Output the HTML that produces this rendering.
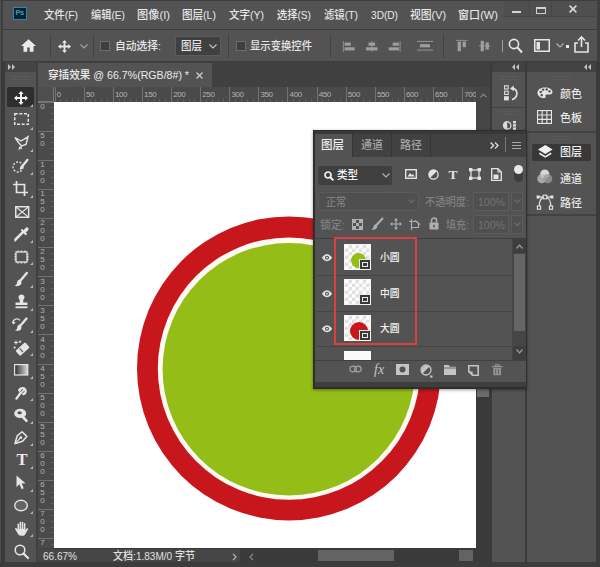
<!DOCTYPE html><html lang="zh-CN"><head><meta charset="utf-8"><title>穿插效果</title><style>
*{margin:0;padding:0;box-sizing:border-box}
html,body{width:600px;height:567px;overflow:hidden;background:#535353}
body{position:relative;font-family:"Liberation Sans","Noto Sans CJK SC",sans-serif;font-size:12px;color:#e6e6e6;line-height:1;font-weight:500}
.a{position:absolute}
.t{position:absolute;white-space:nowrap;line-height:14px;height:14px}
svg{position:absolute;overflow:visible}
</style></head><body>
<div class="a" style="left:0px;top:0px;width:600px;height:30px;background:#535353;"></div>
<div class="a" style="left:0px;top:28.5px;width:600px;height:1.5px;background:#3c3c3c;"></div>
<div class="a" style="left:12.5px;top:7px;width:14px;height:12.5px;background:#0a2131;border:1.5px solid #2f86ad;color:#3d9bc4;font-size:7.5px;font-weight:bold;line-height:9.5px;text-align:center;letter-spacing:-0.5px">Ps</div>
<div class="t" style="transform:scaleX(0.943);transform-origin:0 0;left:44px;top:8px;font-size:11px;color:#e8e8e8;">文件(F)</div>
<div class="t" style="transform:scaleX(0.927);transform-origin:0 0;left:91px;top:8px;font-size:11px;color:#e8e8e8;">编辑(E)</div>
<div class="t" style="transform:scaleX(1.019);transform-origin:0 0;left:137px;top:8px;font-size:11px;color:#e8e8e8;">图像(I)</div>
<div class="t" style="transform:scaleX(0.959);transform-origin:0 0;left:182px;top:8px;font-size:11px;color:#e8e8e8;">图层(L)</div>
<div class="t" style="transform:scaleX(0.954);transform-origin:0 0;left:229px;top:8px;font-size:11px;color:#e8e8e8;">文字(Y)</div>
<div class="t" style="transform:scaleX(0.927);transform-origin:0 0;left:277px;top:8px;font-size:11px;color:#e8e8e8;">选择(S)</div>
<div class="t" style="transform:scaleX(0.943);transform-origin:0 0;left:324px;top:8px;font-size:11px;color:#e8e8e8;">滤镜(T)</div>
<div class="t" style="transform:scaleX(0.920);transform-origin:0 0;left:371px;top:8px;font-size:11px;color:#e8e8e8;">3D(D)</div>
<div class="t" style="transform:scaleX(0.982);transform-origin:0 0;left:410px;top:8px;font-size:11px;color:#e8e8e8;">视图(V)</div>
<div class="t" style="transform:scaleX(1.007);transform-origin:0 0;left:458px;top:8px;font-size:11px;color:#e8e8e8;">窗口(W)</div>
<div class="a" style="left:504px;top:1px;width:91.5px;height:15px;background:#4f4f4f;"></div>
<div class="a" style="left:504px;top:16px;width:91.5px;height:1px;background:#474747;"></div>
<div class="a" style="left:528.5px;top:1px;width:1px;height:15px;background:#464646;"></div>
<div class="a" style="left:551px;top:1px;width:1px;height:15px;background:#464646;"></div>
<div class="a" style="left:512px;top:11px;width:9px;height:2px;background:#d4d4d4;"></div>
<div class="a" style="left:536px;top:6.5px;width:9.5px;height:7px;border:1.4px solid #d0d0d0;border-top-width:2px"></div>
<svg style="left:569px;top:5px" width="8" height="8"><path d="M0.6 0.6L7.4 7.4M7.4 0.6L0.6 7.4" stroke="#d4d4d4" stroke-width="1.7"/></svg>
<div class="a" style="left:0px;top:30px;width:600px;height:32px;background:#535353;"></div>
<div class="a" style="left:0px;top:61px;width:600px;height:1px;background:#3c3c3c;"></div>
<svg style="left:20.5px;top:39px" width="15" height="13" viewBox="0 0 18 15"><path d="M9 0L0 8H3V15H7.5V10H10.5V15H15V8H18Z" fill="#ececec"/></svg>
<div class="a" style="left:50px;top:34px;width:1px;height:24px;background:#424242;"></div>
<svg style="left:57.5px;top:39.5px" width="13" height="13" viewBox="0 0 16 16"><path d="M8 0L5 3.4H6.9V6.9H3.4V5L0 8L3.4 11V9.1H6.9V12.6H5L8 16L11 12.6H9.1V9.1H12.6V11L16 8L12.6 5V6.9H9.1V3.4H11Z" fill="#e6e6e6"/></svg>
<svg style="left:79.5px;top:43.5px" width="8" height="5"><path d="M0.5 0.5L4 4L7.5 0.5" stroke="#a4a4a4" stroke-width="1.2" fill="none"/></svg>
<div class="a" style="left:93px;top:34px;width:1px;height:24px;background:#424242;"></div>
<div class="a" style="left:100px;top:41px;width:10px;height:10px;border:1px solid #6c6c6c;background:#3e3e3e"></div>
<div class="t" style="transform:scaleX(0.977);transform-origin:0 0;left:115px;top:39px;font-size:11px;color:#e6e6e6;">自动选择:</div>
<div class="a" style="left:175px;top:36px;width:46px;height:20px;border:1px solid #5c5c5c;background:#404040;border-radius:2px"></div>
<div class="t" style="transform:scaleX(0.955);transform-origin:0 0;left:181px;top:39px;font-size:11px;color:#e6e6e6;">图层</div>
<svg style="left:209px;top:44px" width="8" height="5"><path d="M0.5 0.5L4 4L7.5 0.5" stroke="#c0c0c0" stroke-width="1.2" fill="none"/></svg>
<div class="a" style="left:228px;top:34px;width:1px;height:24px;background:#424242;"></div>
<div class="a" style="left:236px;top:41px;width:10px;height:10px;border:1px solid #6c6c6c;background:#3e3e3e"></div>
<div class="t" style="transform:scaleX(0.939);transform-origin:0 0;left:250px;top:39px;font-size:11px;color:#e6e6e6;">显示变换控件</div>
<div class="a" style="left:330px;top:34px;width:1px;height:24px;background:#424242;"></div>
<svg style="left:342.5px;top:40.5px" width="12.5" height="11" viewBox="0 0 16 14" preserveAspectRatio="none"><path d="M0.5 0V14" stroke="#9e9e9e"/><rect x="2" y="2" width="8" height="4" fill="#9e9e9e"/><rect x="2" y="8" width="13" height="4" fill="#9e9e9e"/></svg>
<svg style="left:365.8px;top:40.5px" width="11.6" height="11" viewBox="0 0 14 14" preserveAspectRatio="none"><path d="M7 0V14" stroke="#9e9e9e"/><rect x="3" y="2" width="8" height="4" fill="#9e9e9e"/><rect x="0" y="8" width="14" height="4" fill="#9e9e9e"/></svg>
<svg style="left:387.5px;top:40.5px" width="12.5" height="11" viewBox="0 0 16 14" preserveAspectRatio="none"><path d="M15.5 0V14" stroke="#9e9e9e"/><rect x="6" y="2" width="8" height="4" fill="#9e9e9e"/><rect x="1" y="8" width="13" height="4" fill="#9e9e9e"/></svg>
<svg style="left:416.5px;top:41px" width="16" height="9.5" viewBox="0 0 16 12" preserveAspectRatio="none"><path d="M0 0.5H16M0 11.5H16" stroke="#9e9e9e"/><rect x="3" y="4" width="10" height="4" fill="#9e9e9e"/></svg>
<div class="a" style="left:443px;top:34px;width:1px;height:24px;background:#424242;"></div>
<svg style="left:456px;top:40px" width="11.5" height="12" viewBox="0 0 14 15" preserveAspectRatio="none"><path d="M0 0.5H14" stroke="#9e9e9e"/><rect x="2" y="2" width="4" height="12" fill="#9e9e9e"/><rect x="8" y="2" width="4" height="7" fill="#9e9e9e"/></svg>
<svg style="left:478.5px;top:40px" width="11.5" height="12" viewBox="0 0 14 15" preserveAspectRatio="none"><path d="M0 7.5H14" stroke="#9e9e9e"/><rect x="2" y="1" width="4" height="13" fill="#9e9e9e"/><rect x="8" y="3" width="4" height="9" fill="#9e9e9e"/></svg>
<div class="a" style="left:501.5px;top:40px;width:1px;height:12px;background:#9e9e9e;"></div>
<svg style="left:508px;top:38px" width="15" height="16"><circle cx="6" cy="6" r="4.6" stroke="#e6e6e6" stroke-width="1.6" fill="none"/><path d="M9.5 9.5L14 14.5" stroke="#e6e6e6" stroke-width="2"/></svg>
<svg style="left:534px;top:39px" width="16" height="13"><rect x="0.75" y="0.75" width="14.5" height="11.5" stroke="#e6e6e6" stroke-width="1.5" fill="none"/><rect x="2.5" y="3" width="3.5" height="7.5" fill="#e6e6e6"/></svg>
<svg style="left:556px;top:43px" width="8" height="5"><path d="M0.5 0.5L4 4L7.5 0.5" stroke="#b0b0b0" stroke-width="1.2" fill="none"/></svg>
<div class="a" style="left:566px;top:45px;width:3px;height:3px;background:#e6e6e6;"></div>
<svg style="left:574px;top:36px" width="15" height="17"><path d="M4 7H1V16H14V7H11" stroke="#e6e6e6" stroke-width="1.6" fill="none"/><path d="M7.5 11V2" stroke="#e6e6e6" stroke-width="1.6"/><path d="M4 4.5L7.5 1L11 4.5" stroke="#e6e6e6" stroke-width="1.6" fill="none"/></svg>
<div class="a" style="left:0px;top:62px;width:600px;height:505px;background:#3f3f3f;"></div>
<div class="a" style="left:0px;top:62px;width:4.5px;height:505px;background:#3a3a3a;"></div>
<div class="a" style="left:4.5px;top:62px;width:31.7px;height:500px;background:#535353;"></div>
<div class="a" style="left:4.5px;top:62px;width:31.7px;height:10px;background:#444444;"></div>
<svg style="left:8px;top:64px" width="8" height="6"><path d="M0 0L3 3L0 6ZM4 0L7 3L4 6Z" fill="#c4c4c4"/></svg>
<div class="a" style="left:12px;top:76px;width:18px;height:1px;background:#5a5a5a;"></div>
<div class="a" style="left:12px;top:79px;width:18px;height:1px;background:#5a5a5a;"></div>
<div class="a" style="left:7px;top:87.3px;width:27.3px;height:20px;background:#2e2e2e;border-radius:2px"></div>
<div class="a" style="left:37px;top:62px;width:453px;height:25px;background:#404040;"></div>
<div class="a" style="left:38px;top:63px;width:174px;height:24px;background:#535353;"></div>
<div class="t" style="transform:scaleX(0.964);transform-origin:0 0;left:48px;top:68px;font-size:11px;color:#ececec;">穿插效果 @ 66.7%(RGB/8#) *</div>
<svg style="left:196px;top:72px" width="7" height="7"><path d="M0.5 0.5L6.5 6.5M6.5 0.5L0.5 6.5" stroke="#c8c8c8" stroke-width="1.4"/></svg>
<div class="a" style="left:38px;top:87px;width:452px;height:15px;background:#4a4a4a;"></div>
<div class="a" style="left:38px;top:87px;width:16px;height:461px;background:#4a4a4a;"></div>
<div class="a" style="left:38px;top:87px;width:16px;height:15px;background:#4e4e4e;"></div>
<div class="a" style="left:53px;top:87px;width:1px;height:15px;background:#777;"></div>
<div class="a" style="left:38px;top:101px;width:16px;height:1px;background:#777;"></div>
<div class="a" style="left:54.6px;top:87px;width:1px;height:15px;background:#727272"></div><div class="t" style="left:56.8px;top:88.8px;font-size:8px;letter-spacing:-0.4px;line-height:11px;height:11px;color:#b4b4b4">0</div><div class="a" style="left:60.4px;top:99px;width:1px;height:3px;background:#606060"></div><div class="a" style="left:66.2px;top:99px;width:1px;height:3px;background:#606060"></div><div class="a" style="left:72.1px;top:99px;width:1px;height:3px;background:#606060"></div><div class="a" style="left:77.9px;top:99px;width:1px;height:3px;background:#606060"></div><div class="a" style="left:83.7px;top:87px;width:1px;height:15px;background:#727272"></div><div class="t" style="left:85.9px;top:88.8px;font-size:8px;letter-spacing:-0.4px;line-height:11px;height:11px;color:#b4b4b4">50</div><div class="a" style="left:89.5px;top:99px;width:1px;height:3px;background:#606060"></div><div class="a" style="left:95.3px;top:99px;width:1px;height:3px;background:#606060"></div><div class="a" style="left:101.2px;top:99px;width:1px;height:3px;background:#606060"></div><div class="a" style="left:107.0px;top:99px;width:1px;height:3px;background:#606060"></div><div class="a" style="left:112.8px;top:87px;width:1px;height:15px;background:#727272"></div><div class="t" style="left:115.0px;top:88.8px;font-size:8px;letter-spacing:-0.4px;line-height:11px;height:11px;color:#b4b4b4">100</div><div class="a" style="left:118.6px;top:99px;width:1px;height:3px;background:#606060"></div><div class="a" style="left:124.4px;top:99px;width:1px;height:3px;background:#606060"></div><div class="a" style="left:130.3px;top:99px;width:1px;height:3px;background:#606060"></div><div class="a" style="left:136.1px;top:99px;width:1px;height:3px;background:#606060"></div><div class="a" style="left:141.9px;top:87px;width:1px;height:15px;background:#727272"></div><div class="t" style="left:144.1px;top:88.8px;font-size:8px;letter-spacing:-0.4px;line-height:11px;height:11px;color:#b4b4b4">150</div><div class="a" style="left:147.7px;top:99px;width:1px;height:3px;background:#606060"></div><div class="a" style="left:153.5px;top:99px;width:1px;height:3px;background:#606060"></div><div class="a" style="left:159.4px;top:99px;width:1px;height:3px;background:#606060"></div><div class="a" style="left:165.2px;top:99px;width:1px;height:3px;background:#606060"></div><div class="a" style="left:171.0px;top:87px;width:1px;height:15px;background:#727272"></div><div class="t" style="left:173.2px;top:88.8px;font-size:8px;letter-spacing:-0.4px;line-height:11px;height:11px;color:#b4b4b4">200</div><div class="a" style="left:176.8px;top:99px;width:1px;height:3px;background:#606060"></div><div class="a" style="left:182.6px;top:99px;width:1px;height:3px;background:#606060"></div><div class="a" style="left:188.5px;top:99px;width:1px;height:3px;background:#606060"></div><div class="a" style="left:194.3px;top:99px;width:1px;height:3px;background:#606060"></div><div class="a" style="left:200.1px;top:87px;width:1px;height:15px;background:#727272"></div><div class="t" style="left:202.3px;top:88.8px;font-size:8px;letter-spacing:-0.4px;line-height:11px;height:11px;color:#b4b4b4">250</div><div class="a" style="left:205.9px;top:99px;width:1px;height:3px;background:#606060"></div><div class="a" style="left:211.7px;top:99px;width:1px;height:3px;background:#606060"></div><div class="a" style="left:217.6px;top:99px;width:1px;height:3px;background:#606060"></div><div class="a" style="left:223.4px;top:99px;width:1px;height:3px;background:#606060"></div><div class="a" style="left:229.2px;top:87px;width:1px;height:15px;background:#727272"></div><div class="t" style="left:231.4px;top:88.8px;font-size:8px;letter-spacing:-0.4px;line-height:11px;height:11px;color:#b4b4b4">300</div><div class="a" style="left:235.0px;top:99px;width:1px;height:3px;background:#606060"></div><div class="a" style="left:240.8px;top:99px;width:1px;height:3px;background:#606060"></div><div class="a" style="left:246.7px;top:99px;width:1px;height:3px;background:#606060"></div><div class="a" style="left:252.5px;top:99px;width:1px;height:3px;background:#606060"></div><div class="a" style="left:258.3px;top:87px;width:1px;height:15px;background:#727272"></div><div class="t" style="left:260.5px;top:88.8px;font-size:8px;letter-spacing:-0.4px;line-height:11px;height:11px;color:#b4b4b4">350</div><div class="a" style="left:264.1px;top:99px;width:1px;height:3px;background:#606060"></div><div class="a" style="left:269.9px;top:99px;width:1px;height:3px;background:#606060"></div><div class="a" style="left:275.8px;top:99px;width:1px;height:3px;background:#606060"></div><div class="a" style="left:281.6px;top:99px;width:1px;height:3px;background:#606060"></div><div class="a" style="left:287.4px;top:87px;width:1px;height:15px;background:#727272"></div><div class="t" style="left:289.6px;top:88.8px;font-size:8px;letter-spacing:-0.4px;line-height:11px;height:11px;color:#b4b4b4">400</div><div class="a" style="left:293.2px;top:99px;width:1px;height:3px;background:#606060"></div><div class="a" style="left:299.0px;top:99px;width:1px;height:3px;background:#606060"></div><div class="a" style="left:304.9px;top:99px;width:1px;height:3px;background:#606060"></div><div class="a" style="left:310.7px;top:99px;width:1px;height:3px;background:#606060"></div><div class="a" style="left:316.5px;top:87px;width:1px;height:15px;background:#727272"></div><div class="t" style="left:318.7px;top:88.8px;font-size:8px;letter-spacing:-0.4px;line-height:11px;height:11px;color:#b4b4b4">450</div><div class="a" style="left:322.3px;top:99px;width:1px;height:3px;background:#606060"></div><div class="a" style="left:328.1px;top:99px;width:1px;height:3px;background:#606060"></div><div class="a" style="left:334.0px;top:99px;width:1px;height:3px;background:#606060"></div><div class="a" style="left:339.8px;top:99px;width:1px;height:3px;background:#606060"></div><div class="a" style="left:345.6px;top:87px;width:1px;height:15px;background:#727272"></div><div class="t" style="left:347.8px;top:88.8px;font-size:8px;letter-spacing:-0.4px;line-height:11px;height:11px;color:#b4b4b4">500</div><div class="a" style="left:351.4px;top:99px;width:1px;height:3px;background:#606060"></div><div class="a" style="left:357.2px;top:99px;width:1px;height:3px;background:#606060"></div><div class="a" style="left:363.1px;top:99px;width:1px;height:3px;background:#606060"></div><div class="a" style="left:368.9px;top:99px;width:1px;height:3px;background:#606060"></div><div class="a" style="left:374.7px;top:87px;width:1px;height:15px;background:#727272"></div><div class="t" style="left:376.9px;top:88.8px;font-size:8px;letter-spacing:-0.4px;line-height:11px;height:11px;color:#b4b4b4">550</div><div class="a" style="left:380.5px;top:99px;width:1px;height:3px;background:#606060"></div><div class="a" style="left:386.3px;top:99px;width:1px;height:3px;background:#606060"></div><div class="a" style="left:392.2px;top:99px;width:1px;height:3px;background:#606060"></div><div class="a" style="left:398.0px;top:99px;width:1px;height:3px;background:#606060"></div><div class="a" style="left:403.8px;top:87px;width:1px;height:15px;background:#727272"></div><div class="t" style="left:406.0px;top:88.8px;font-size:8px;letter-spacing:-0.4px;line-height:11px;height:11px;color:#b4b4b4">600</div><div class="a" style="left:409.6px;top:99px;width:1px;height:3px;background:#606060"></div><div class="a" style="left:415.4px;top:99px;width:1px;height:3px;background:#606060"></div><div class="a" style="left:421.3px;top:99px;width:1px;height:3px;background:#606060"></div><div class="a" style="left:427.1px;top:99px;width:1px;height:3px;background:#606060"></div><div class="a" style="left:432.9px;top:87px;width:1px;height:15px;background:#727272"></div><div class="t" style="left:435.1px;top:88.8px;font-size:8px;letter-spacing:-0.4px;line-height:11px;height:11px;color:#b4b4b4">650</div><div class="a" style="left:438.7px;top:99px;width:1px;height:3px;background:#606060"></div><div class="a" style="left:444.5px;top:99px;width:1px;height:3px;background:#606060"></div><div class="a" style="left:450.4px;top:99px;width:1px;height:3px;background:#606060"></div><div class="a" style="left:456.2px;top:99px;width:1px;height:3px;background:#606060"></div><div class="a" style="left:462.0px;top:87px;width:1px;height:15px;background:#727272"></div><div class="t" style="left:464.2px;top:88.8px;font-size:8px;letter-spacing:-0.4px;line-height:11px;height:11px;color:#b4b4b4">700</div><div class="a" style="left:467.8px;top:99px;width:1px;height:3px;background:#606060"></div><div class="a" style="left:473.6px;top:99px;width:1px;height:3px;background:#606060"></div><div class="a" style="left:38px;top:101.6px;width:16px;height:1px;background:#727272"></div><div class="a" style="left:38.5px;top:102.9px;font-size:8px;line-height:8px;color:#b4b4b4;width:8px;text-align:center;overflow:hidden;max-height:442px">0</div><div class="a" style="left:51px;top:107.4px;width:3px;height:1px;background:#606060"></div><div class="a" style="left:51px;top:113.2px;width:3px;height:1px;background:#606060"></div><div class="a" style="left:51px;top:119.1px;width:3px;height:1px;background:#606060"></div><div class="a" style="left:51px;top:124.9px;width:3px;height:1px;background:#606060"></div><div class="a" style="left:38px;top:130.7px;width:16px;height:1px;background:#727272"></div><div class="a" style="left:38.5px;top:132.0px;font-size:8px;line-height:8px;color:#b4b4b4;width:8px;text-align:center;overflow:hidden;max-height:413px">5<br>0</div><div class="a" style="left:51px;top:136.5px;width:3px;height:1px;background:#606060"></div><div class="a" style="left:51px;top:142.3px;width:3px;height:1px;background:#606060"></div><div class="a" style="left:51px;top:148.2px;width:3px;height:1px;background:#606060"></div><div class="a" style="left:51px;top:154.0px;width:3px;height:1px;background:#606060"></div><div class="a" style="left:38px;top:159.8px;width:16px;height:1px;background:#727272"></div><div class="a" style="left:38.5px;top:161.1px;font-size:8px;line-height:8px;color:#b4b4b4;width:8px;text-align:center;overflow:hidden;max-height:384px">1<br>0<br>0</div><div class="a" style="left:51px;top:165.6px;width:3px;height:1px;background:#606060"></div><div class="a" style="left:51px;top:171.4px;width:3px;height:1px;background:#606060"></div><div class="a" style="left:51px;top:177.3px;width:3px;height:1px;background:#606060"></div><div class="a" style="left:51px;top:183.1px;width:3px;height:1px;background:#606060"></div><div class="a" style="left:38px;top:188.9px;width:16px;height:1px;background:#727272"></div><div class="a" style="left:38.5px;top:190.2px;font-size:8px;line-height:8px;color:#b4b4b4;width:8px;text-align:center;overflow:hidden;max-height:355px">1<br>5<br>0</div><div class="a" style="left:51px;top:194.7px;width:3px;height:1px;background:#606060"></div><div class="a" style="left:51px;top:200.5px;width:3px;height:1px;background:#606060"></div><div class="a" style="left:51px;top:206.4px;width:3px;height:1px;background:#606060"></div><div class="a" style="left:51px;top:212.2px;width:3px;height:1px;background:#606060"></div><div class="a" style="left:38px;top:218.0px;width:16px;height:1px;background:#727272"></div><div class="a" style="left:38.5px;top:219.3px;font-size:8px;line-height:8px;color:#b4b4b4;width:8px;text-align:center;overflow:hidden;max-height:326px">2<br>0<br>0</div><div class="a" style="left:51px;top:223.8px;width:3px;height:1px;background:#606060"></div><div class="a" style="left:51px;top:229.6px;width:3px;height:1px;background:#606060"></div><div class="a" style="left:51px;top:235.5px;width:3px;height:1px;background:#606060"></div><div class="a" style="left:51px;top:241.3px;width:3px;height:1px;background:#606060"></div><div class="a" style="left:38px;top:247.1px;width:16px;height:1px;background:#727272"></div><div class="a" style="left:38.5px;top:248.4px;font-size:8px;line-height:8px;color:#b4b4b4;width:8px;text-align:center;overflow:hidden;max-height:297px">2<br>5<br>0</div><div class="a" style="left:51px;top:252.9px;width:3px;height:1px;background:#606060"></div><div class="a" style="left:51px;top:258.7px;width:3px;height:1px;background:#606060"></div><div class="a" style="left:51px;top:264.6px;width:3px;height:1px;background:#606060"></div><div class="a" style="left:51px;top:270.4px;width:3px;height:1px;background:#606060"></div><div class="a" style="left:38px;top:276.2px;width:16px;height:1px;background:#727272"></div><div class="a" style="left:38.5px;top:277.5px;font-size:8px;line-height:8px;color:#b4b4b4;width:8px;text-align:center;overflow:hidden;max-height:268px">3<br>0<br>0</div><div class="a" style="left:51px;top:282.0px;width:3px;height:1px;background:#606060"></div><div class="a" style="left:51px;top:287.8px;width:3px;height:1px;background:#606060"></div><div class="a" style="left:51px;top:293.7px;width:3px;height:1px;background:#606060"></div><div class="a" style="left:51px;top:299.5px;width:3px;height:1px;background:#606060"></div><div class="a" style="left:38px;top:305.3px;width:16px;height:1px;background:#727272"></div><div class="a" style="left:38.5px;top:306.6px;font-size:8px;line-height:8px;color:#b4b4b4;width:8px;text-align:center;overflow:hidden;max-height:239px">3<br>5<br>0</div><div class="a" style="left:51px;top:311.1px;width:3px;height:1px;background:#606060"></div><div class="a" style="left:51px;top:316.9px;width:3px;height:1px;background:#606060"></div><div class="a" style="left:51px;top:322.8px;width:3px;height:1px;background:#606060"></div><div class="a" style="left:51px;top:328.6px;width:3px;height:1px;background:#606060"></div><div class="a" style="left:38px;top:334.4px;width:16px;height:1px;background:#727272"></div><div class="a" style="left:38.5px;top:335.7px;font-size:8px;line-height:8px;color:#b4b4b4;width:8px;text-align:center;overflow:hidden;max-height:210px">4<br>0<br>0</div><div class="a" style="left:51px;top:340.2px;width:3px;height:1px;background:#606060"></div><div class="a" style="left:51px;top:346.0px;width:3px;height:1px;background:#606060"></div><div class="a" style="left:51px;top:351.9px;width:3px;height:1px;background:#606060"></div><div class="a" style="left:51px;top:357.7px;width:3px;height:1px;background:#606060"></div><div class="a" style="left:38px;top:363.5px;width:16px;height:1px;background:#727272"></div><div class="a" style="left:38.5px;top:364.8px;font-size:8px;line-height:8px;color:#b4b4b4;width:8px;text-align:center;overflow:hidden;max-height:180px">4<br>5<br>0</div><div class="a" style="left:51px;top:369.3px;width:3px;height:1px;background:#606060"></div><div class="a" style="left:51px;top:375.1px;width:3px;height:1px;background:#606060"></div><div class="a" style="left:51px;top:381.0px;width:3px;height:1px;background:#606060"></div><div class="a" style="left:51px;top:386.8px;width:3px;height:1px;background:#606060"></div><div class="a" style="left:38px;top:392.6px;width:16px;height:1px;background:#727272"></div><div class="a" style="left:38.5px;top:393.9px;font-size:8px;line-height:8px;color:#b4b4b4;width:8px;text-align:center;overflow:hidden;max-height:151px">5<br>0<br>0</div><div class="a" style="left:51px;top:398.4px;width:3px;height:1px;background:#606060"></div><div class="a" style="left:51px;top:404.2px;width:3px;height:1px;background:#606060"></div><div class="a" style="left:51px;top:410.1px;width:3px;height:1px;background:#606060"></div><div class="a" style="left:51px;top:415.9px;width:3px;height:1px;background:#606060"></div><div class="a" style="left:38px;top:421.7px;width:16px;height:1px;background:#727272"></div><div class="a" style="left:38.5px;top:423.0px;font-size:8px;line-height:8px;color:#b4b4b4;width:8px;text-align:center;overflow:hidden;max-height:122px">5<br>5<br>0</div><div class="a" style="left:51px;top:427.5px;width:3px;height:1px;background:#606060"></div><div class="a" style="left:51px;top:433.3px;width:3px;height:1px;background:#606060"></div><div class="a" style="left:51px;top:439.2px;width:3px;height:1px;background:#606060"></div><div class="a" style="left:51px;top:445.0px;width:3px;height:1px;background:#606060"></div><div class="a" style="left:38px;top:450.8px;width:16px;height:1px;background:#727272"></div><div class="a" style="left:38.5px;top:452.1px;font-size:8px;line-height:8px;color:#b4b4b4;width:8px;text-align:center;overflow:hidden;max-height:93px">6<br>0<br>0</div><div class="a" style="left:51px;top:456.6px;width:3px;height:1px;background:#606060"></div><div class="a" style="left:51px;top:462.4px;width:3px;height:1px;background:#606060"></div><div class="a" style="left:51px;top:468.3px;width:3px;height:1px;background:#606060"></div><div class="a" style="left:51px;top:474.1px;width:3px;height:1px;background:#606060"></div><div class="a" style="left:38px;top:479.9px;width:16px;height:1px;background:#727272"></div><div class="a" style="left:38.5px;top:481.2px;font-size:8px;line-height:8px;color:#b4b4b4;width:8px;text-align:center;overflow:hidden;max-height:64px">6<br>5<br>0</div><div class="a" style="left:51px;top:485.7px;width:3px;height:1px;background:#606060"></div><div class="a" style="left:51px;top:491.5px;width:3px;height:1px;background:#606060"></div><div class="a" style="left:51px;top:497.4px;width:3px;height:1px;background:#606060"></div><div class="a" style="left:51px;top:503.2px;width:3px;height:1px;background:#606060"></div><div class="a" style="left:38px;top:509.0px;width:16px;height:1px;background:#727272"></div><div class="a" style="left:38.5px;top:510.3px;font-size:8px;line-height:8px;color:#b4b4b4;width:8px;text-align:center;overflow:hidden;max-height:35px">7<br>0<br>0</div><div class="a" style="left:51px;top:514.8px;width:3px;height:1px;background:#606060"></div><div class="a" style="left:51px;top:520.6px;width:3px;height:1px;background:#606060"></div><div class="a" style="left:51px;top:526.5px;width:3px;height:1px;background:#606060"></div><div class="a" style="left:51px;top:532.3px;width:3px;height:1px;background:#606060"></div><div class="a" style="left:38px;top:538.1px;width:16px;height:1px;background:#727272"></div><div class="a" style="left:38.5px;top:539.4px;font-size:8px;line-height:8px;color:#b4b4b4;width:8px;text-align:center;overflow:hidden;max-height:6px">7<br>5<br>0</div><div class="a" style="left:51px;top:543.9px;width:3px;height:1px;background:#606060"></div>
<div class="a" style="left:54px;top:102px;width:422px;height:446px;background:#fff;overflow:hidden"><svg style="left:0;top:0" width="422" height="446"><circle cx="235" cy="266.4" r="152" fill="#c8161d"/><circle cx="235" cy="266.6" r="131.2" fill="#fdfbf2"/><circle cx="234.8" cy="267.2" r="126.2" fill="#95bd18"/></svg></div>
<div class="a" style="left:476px;top:87px;width:14px;height:475px;background:#3a3a3a;"></div>
<div class="a" style="left:476px;top:87px;width:14px;height:44px;background:#464646;"></div>
<svg style="left:480px;top:92.5px" width="7" height="5" viewBox="0 0 8 5"><path d="M0.5 4.5L4 1L7.5 4.5" stroke="#9a9a9a" stroke-width="1.2" fill="none"/></svg>
<div class="a" style="left:477px;top:389px;width:12px;height:8px;background:#6b6b6b;"></div>
<div class="a" style="left:54px;top:548px;width:436px;height:14px;background:#3a3a3a;"></div>
<div class="a" style="left:318px;top:550px;width:76px;height:11px;background:#636363;"></div>
<div class="a" style="left:459px;top:550px;width:14px;height:11px;background:#636363;"></div>
<div class="a" style="left:37px;top:548.5px;width:203px;height:14px;background:#464646;"></div>
<svg style="left:232px;top:552.5px" width="5" height="8"><path d="M1 0.8L4 4L1 7.2" stroke="#b8b8b8" stroke-width="1.2" fill="none"/></svg>
<svg style="left:248.5px;top:552.5px" width="5" height="8"><path d="M4 0.8L1 4L4 7.2" stroke="#8a8a8a" stroke-width="1.2" fill="none"/></svg>
<div class="t" style="transform:scaleX(0.911);transform-origin:0 0;left:42.5px;top:548.5px;font-size:11px;color:#e0e0e0;">66.67%</div>
<div class="t" style="transform:scaleX(0.913);transform-origin:0 0;left:113px;top:548.5px;font-size:11px;color:#e0e0e0;">文档:1.83M/0 字节</div>
<div class="a" style="left:490px;top:62px;width:110px;height:505px;background:#3a3a3a;"></div>
<div class="a" style="left:492px;top:62px;width:33px;height:500px;background:#535353;"></div>
<div class="a" style="left:492px;top:62px;width:33px;height:10px;background:#424242;"></div>
<svg style="left:512px;top:64px" width="8" height="6"><path d="M3 0L0 3L3 6ZM7 0L4 3L7 6Z" fill="#c4c4c4"/></svg>
<div class="a" style="left:500px;top:76px;width:18px;height:1px;background:#5a5a5a;"></div>
<div class="a" style="left:500px;top:79px;width:18px;height:1px;background:#5a5a5a;"></div>
<div class="a" style="left:492px;top:107px;width:33px;height:1px;background:#424242;"></div>
<div class="a" style="left:500px;top:111px;width:18px;height:1px;background:#5a5a5a;"></div>
<div class="a" style="left:500px;top:114px;width:18px;height:1px;background:#5a5a5a;"></div>
<svg style="left:503.5px;top:85px" width="15" height="16"><g fill="none" stroke="#e0e0e0" stroke-width="1.1"><rect x="0.6" y="0.8" width="3.6" height="3.2"/><rect x="0.6" y="6.2" width="3.6" height="3.2"/></g><rect x="0" y="11.2" width="4.8" height="4.2" fill="#e0e0e0"/><path d="M8 14.6C12 13.6 13.6 10 12.6 6.6C12 4.6 10.6 3.6 8.8 3.4" stroke="#e0e0e0" stroke-width="1.7" fill="none"/><path d="M6 3.4L9.8 0.6V6.2Z" fill="#e0e0e0"/></svg>
<svg style="left:503px;top:119px" width="15" height="12"><circle cx="4.2" cy="6.4" r="3.7" fill="none" stroke="#dcdcdc" stroke-width="1.2"/><path d="M4.2 2.7A3.7 3.7 0 0 0 4.2 10.1Z" fill="#dcdcdc"/><rect x="10" y="2" width="3" height="2.4" fill="#dcdcdc"/><rect x="10" y="5.2" width="3" height="2.4" fill="#dcdcdc"/><rect x="10" y="8.4" width="3" height="2.4" fill="#dcdcdc"/></svg>
<div class="a" style="left:527px;top:62px;width:69px;height:500px;background:#535353;"></div>
<div class="a" style="left:527px;top:62px;width:69px;height:10px;background:#424242;"></div>
<svg style="left:584px;top:64px" width="8" height="6"><path d="M3 0L0 3L3 6ZM7 0L4 3L7 6Z" fill="#c4c4c4"/></svg>
<div class="a" style="left:552px;top:76px;width:18px;height:1px;background:#5a5a5a;"></div>
<div class="a" style="left:552px;top:79px;width:18px;height:1px;background:#5a5a5a;"></div>
<div class="a" style="left:527px;top:131px;width:69px;height:2px;background:#424242;"></div>
<div class="a" style="left:552px;top:136px;width:18px;height:1px;background:#5a5a5a;"></div>
<div class="a" style="left:552px;top:139px;width:18px;height:1px;background:#5a5a5a;"></div>
<div class="a" style="left:527px;top:214px;width:69px;height:2px;background:#424242;"></div>
<div class="a" style="left:532px;top:143.6px;width:58.6px;height:17.4px;background:#383838;border-radius:2px"></div>
<svg style="left:536.8px;top:87.3px" width="16" height="11.6" viewBox="0 0 17 14" preserveAspectRatio="none"><path d="M8.5 0.5C3.5 0.5 0.5 3.5 0.5 7C0.5 10.5 3.5 13.5 7.5 13.5C9.5 13.5 9.5 12 9 11C8.5 9.8 9.5 9 11 9H13.5C15.5 9 16.5 7.8 16.5 6C16.5 3 13 0.5 8.5 0.5Z" fill="#e6e6e6"/><circle cx="4" cy="6" r="1.4" fill="#535353"/><circle cx="6.5" cy="3.3" r="1.4" fill="#535353"/><circle cx="10.3" cy="3" r="1.4" fill="#535353"/><circle cx="13.3" cy="5.3" r="1.4" fill="#535353"/><circle cx="5" cy="10" r="1.4" fill="#535353"/></svg>
<div class="t" style="transform:scaleX(1.000);transform-origin:0 0;left:560px;top:87px;font-size:11px;color:#e8e8e8;">颜色</div>
<svg style="left:536.8px;top:109.6px" width="15" height="14" viewBox="0 0 16 15" preserveAspectRatio="none"><g stroke="#e6e6e6" stroke-width="1.2" fill="none"><rect x="0.6" y="0.6" width="14.8" height="13.8"/><path d="M5.5 0V15M10.5 0V15M0 5.3H16M0 10H16"/></g></svg>
<div class="t" style="transform:scaleX(1.000);transform-origin:0 0;left:560px;top:111px;font-size:11px;color:#e8e8e8;">色板</div>
<svg style="left:538px;top:145.3px" width="14.6" height="14.6" viewBox="0 0 16 16"><path d="M8 0L16 5L8 10L0 5Z" fill="#f0f0f0"/><path d="M1.5 9L8 13L14.5 9" stroke="#f0f0f0" stroke-width="1.8" fill="none"/></svg>
<div class="t" style="transform:scaleX(1.000);transform-origin:0 0;left:560px;top:145px;font-size:11px;color:#f0f0f0;">图层</div>
<svg style="left:536.8px;top:169.3px" width="15.6" height="14.8" viewBox="0 0 17 16"><circle cx="8.5" cy="5.5" r="5" fill="#e6e6e6" fill-opacity=".9"/><circle cx="5.3" cy="10.5" r="5" fill="#bdbdbd" fill-opacity=".8"/><circle cx="11.7" cy="10.5" r="5" fill="#9a9a9a" fill-opacity=".8"/></svg>
<div class="t" style="transform:scaleX(1.000);transform-origin:0 0;left:560px;top:172px;font-size:11px;color:#e8e8e8;">通道</div>
<svg style="left:536px;top:194px" width="18" height="16"><g stroke="#e6e6e6" stroke-width="1.2" fill="none"><path d="M3 14C3 7 5 3 9 3C13 3 15 7 15 14"/><path d="M2 3H16"/></g><rect x="7.2" y="1.2" width="3.6" height="3.6" fill="#535353" stroke="#e6e6e6" stroke-width="1.1"/><rect x="0.6" y="1.5" width="3" height="3" fill="#e6e6e6"/><rect x="14.4" y="1.5" width="3" height="3" fill="#e6e6e6"/><rect x="1.4" y="12" width="3.2" height="3.2" fill="#535353" stroke="#e6e6e6" stroke-width="1.1"/><rect x="13.4" y="12" width="3.2" height="3.2" fill="#535353" stroke="#e6e6e6" stroke-width="1.1"/></svg>
<div class="t" style="transform:scaleX(1.000);transform-origin:0 0;left:560px;top:196px;font-size:11px;color:#e8e8e8;">路径</div>
<div class="a" style="left:313px;top:130px;width:214px;height:258.5px;background:#2e2e2e;box-shadow:0 1px 3px rgba(0,0,0,.4)"></div>
<div class="a" style="left:314.5px;top:131px;width:211.5px;height:2.5px;background:#383838;"></div>
<div class="a" style="left:314.5px;top:133.5px;width:211.5px;height:248.5px;background:#535353;"></div>
<div class="a" style="left:314.5px;top:382px;width:211.5px;height:5px;background:#3e3e3e;"></div>
<div class="a" style="left:314.5px;top:133.5px;width:211.5px;height:23px;background:#414141;"></div>
<div class="a" style="left:314.5px;top:133.5px;width:37.5px;height:23.5px;background:#535353;"></div>
<div class="a" style="left:352px;top:133.5px;width:1px;height:23px;background:#343434;"></div>
<div class="a" style="left:391px;top:133.5px;width:1px;height:23px;background:#343434;"></div>
<div class="a" style="left:429.5px;top:133.5px;width:1px;height:23px;background:#343434;"></div>
<div class="t" style="transform:scaleX(1.045);transform-origin:0 0;left:321px;top:138px;font-size:11px;color:#f0f0f0;">图层</div>
<div class="t" style="transform:scaleX(1.000);transform-origin:0 0;left:361px;top:138px;font-size:11px;color:#a8a8a8;">通道</div>
<div class="t" style="transform:scaleX(1.000);transform-origin:0 0;left:400px;top:138px;font-size:11px;color:#a8a8a8;">路径</div>
<svg style="left:490px;top:142px" width="9" height="7"><path d="M0.6 0.5L3.6 3.5L0.6 6.5M5 0.5L8 3.5L5 6.5" stroke="#e0e0e0" stroke-width="1.3" fill="none"/></svg>
<div class="a" style="left:505px;top:137px;width:1px;height:15px;background:#7a7a7a;"></div>
<div class="a" style="left:511.5px;top:141.8px;width:9.5px;height:1.6px;background:#a8a8a8;"></div>
<div class="a" style="left:511.5px;top:144.7px;width:9.5px;height:1.6px;background:#a8a8a8;"></div>
<div class="a" style="left:511.5px;top:147.6px;width:9.5px;height:1.6px;background:#a8a8a8;"></div>
<div class="a" style="left:318px;top:166px;width:74px;height:19px;background:#3f3f3f;border-radius:2px"></div>
<svg style="left:323.5px;top:170.5px" width="10" height="10"><circle cx="4" cy="4" r="3" stroke="#f0f0f0" stroke-width="1.7" fill="none"/><path d="M6.3 6.3L9.4 9.4" stroke="#f0f0f0" stroke-width="2"/></svg>
<div class="t" style="transform:scaleX(0.955);transform-origin:0 0;left:337px;top:168px;font-size:11px;color:#f4f4f4;">类型</div>
<svg style="left:382px;top:173px" width="8" height="5"><path d="M0.5 0.5L4 4L7.5 0.5" stroke="#b0b0b0" stroke-width="1.2" fill="none"/></svg>
<svg style="left:405px;top:169px" width="12" height="10"><rect x="0.7" y="0.7" width="10.6" height="8.6" stroke="#e4e4e4" stroke-width="1.4" fill="none"/><path d="M2.5 7.5L5 4L6.8 6L8 5L9.5 7.5Z" fill="#e4e4e4"/></svg>
<svg style="left:428px;top:169px" width="11" height="11"><circle cx="5.5" cy="5.5" r="4.6" stroke="#e4e4e4" stroke-width="1.3" fill="none"/><path d="M2.2 8.8A4.6 4.6 0 0 1 8.8 2.2Z" fill="#e4e4e4"/></svg>
<div class="t" style="left:448.5px;top:167px;font-family:'Liberation Serif',serif;font-weight:bold;font-size:13.5px;color:#e4e4e4;line-height:16px;height:16px">T</div>
<svg style="left:469px;top:168px" width="12" height="12"><rect x="2" y="2" width="8" height="8" stroke="#e4e4e4" stroke-width="1.2" fill="none"/><rect x="0" y="0" width="3.4" height="3.4" fill="#e4e4e4"/><rect x="8.6" y="0" width="3.4" height="3.4" fill="#e4e4e4"/><rect x="0" y="8.6" width="3.4" height="3.4" fill="#e4e4e4"/><rect x="8.6" y="8.6" width="3.4" height="3.4" fill="#e4e4e4"/></svg>
<svg style="left:491px;top:168px" width="11" height="13"><path d="M0.7 0.7H7L10.3 4V12.3H0.7Z" stroke="#e4e4e4" stroke-width="1.3" fill="none"/><path d="M7 0.7V4H10.3" stroke="#e4e4e4" stroke-width="1.1" fill="none"/><rect x="2.5" y="6.5" width="5" height="4.5" fill="#e4e4e4"/></svg>
<div class="a" style="left:514px;top:165px;width:9px;height:17px;background:#3e3e3e;border-radius:4.5px"></div>
<div class="a" style="left:514px;top:165px;width:9px;height:9px;background:#e8e8e8;border-radius:50%"></div>
<div class="a" style="left:318px;top:192px;width:101px;height:19px;border:1px solid #5c5c5c;background:#4f4f4f;border-radius:2px"></div>
<div class="t" style="transform:scaleX(0.909);transform-origin:0 0;left:326px;top:195px;font-size:11px;color:#808080;">正常</div>
<svg style="left:408px;top:199px" width="7" height="5"><path d="M0.5 0.5L3.5 3.5L6.5 0.5" stroke="#6c6c6c" stroke-width="1.1" fill="none"/></svg>
<div class="t" style="transform:scaleX(0.935);transform-origin:0 0;left:425px;top:195px;font-size:11px;color:#808080;">不透明度:</div>
<div class="a" style="left:473px;top:192px;width:36px;height:19px;border:1px solid #5c5c5c;background:#4f4f4f"></div>
<div class="t" style="transform:scaleX(0.959);transform-origin:0 0;left:478px;top:195px;font-size:11px;color:#747474;">100%</div>
<div class="a" style="left:511px;top:192px;width:12px;height:19px;border:1px solid #5c5c5c;background:#4f4f4f"></div>
<svg style="left:514px;top:199px" width="7" height="5"><path d="M0.5 0.5L3.5 3.5L6.5 0.5" stroke="#6c6c6c" stroke-width="1.1" fill="none"/></svg>
<div class="t" style="transform:scaleX(0.998);transform-origin:0 0;left:320px;top:218px;font-size:11px;color:#808080;">锁定:</div>
<svg style="left:352px;top:219px" width="11" height="11"><rect x="0.5" y="0.5" width="10" height="10" fill="none" stroke="#b0b0b0"/><rect x="1" y="1" width="3" height="3" fill="#b0b0b0"/><rect x="7" y="1" width="3" height="3" fill="#b0b0b0"/><rect x="4" y="4" width="3" height="3" fill="#b0b0b0"/><rect x="1" y="7" width="3" height="3" fill="#b0b0b0"/><rect x="7" y="7" width="3" height="3" fill="#b0b0b0"/></svg>
<svg style="left:371px;top:218px" width="12" height="12"><path d="M11.5 0.5L5.5 7" stroke="#b0b0b0" stroke-width="2" stroke-linecap="round"/><path d="M4.8 6.2C3 6.5 2.5 8 2.3 9.3C2.1 10.5 1.2 11 0.3 11.4C2.5 12 5 11.5 6 9.8C6.6 8.8 6.3 7.5 4.8 6.2Z" fill="#b0b0b0"/></svg>
<svg style="left:390px;top:218px" width="12" height="12" viewBox="0 0 16 16"><path d="M8 0L5.2 3.2H7.2V7.2H3.2V5.2L0 8L3.2 10.8V8.8H7.2V12.8H5.2L8 16L10.8 12.8H8.8V8.8H12.8V10.8L16 8L12.8 5.2V7.2H8.8V3.2H10.8Z" fill="#b0b0b0"/></svg>
<svg style="left:409px;top:219px" width="12" height="11"><path d="M2.5 0V11M0 2.5H8.5" stroke="#b0b0b0" stroke-width="1.2" fill="none"/><path d="M2.5 8.5H9.5V5" stroke="#b0b0b0" stroke-width="1.2" fill="none"/><path d="M6 1.5L11 5.5" stroke="#b0b0b0" stroke-width="1.4"/></svg>
<svg style="left:429px;top:217px" width="10" height="13"><rect x="0.5" y="5.5" width="9" height="7" rx="0.8" fill="#b0b0b0"/><path d="M2.5 5.5V3.5A2.5 2.5 0 0 1 7.5 3.5V5.5" stroke="#b0b0b0" stroke-width="1.5" fill="none"/><rect x="4.2" y="7.8" width="1.6" height="2.6" fill="#535353"/></svg>
<div class="t" style="transform:scaleX(0.918);transform-origin:0 0;left:446px;top:218px;font-size:11px;color:#808080;">填充:</div>
<div class="a" style="left:473px;top:215px;width:36px;height:19px;border:1px solid #5c5c5c;background:#4f4f4f"></div>
<div class="t" style="transform:scaleX(0.959);transform-origin:0 0;left:478px;top:218px;font-size:11px;color:#747474;">100%</div>
<div class="a" style="left:511px;top:215px;width:12px;height:19px;border:1px solid #5c5c5c;background:#4f4f4f"></div>
<svg style="left:514px;top:222px" width="7" height="5"><path d="M0.5 0.5L3.5 3.5L6.5 0.5" stroke="#6c6c6c" stroke-width="1.1" fill="none"/></svg>
<div class="a" style="left:314px;top:238px;width:212px;height:1px;background:#3f3f3f;"></div>
<div class="a" style="left:314px;top:275px;width:198px;height:1px;background:#454545;"></div>
<div class="a" style="left:314px;top:310.5px;width:198px;height:1px;background:#454545;"></div>
<div class="a" style="left:314px;top:346px;width:198px;height:1px;background:#454545;"></div>
<svg style="left:321.2px;top:254.3px" width="12" height="7.4" viewBox="0 0 13 9"><path d="M0.3 4.5C2.5 1 5 0.3 6.5 0.3C8 0.3 10.5 1 12.7 4.5C10.5 8 8 8.7 6.5 8.7C5 8.7 2.5 8 0.3 4.5Z" fill="#e4e4e4"/><circle cx="6.5" cy="4.5" r="2.5" fill="#535353"/><circle cx="6.5" cy="4.5" r="1.1" fill="#e4e4e4"/></svg>
<div class="a" style="left:344.3px;top:243.5px;width:26.6px;height:26.4px;border:1px solid #f6f6f6;background-color:#fff;background-image:linear-gradient(45deg,#dedede 25%,transparent 25%,transparent 75%,#dedede 75%),linear-gradient(45deg,#dedede 25%,transparent 25%,transparent 75%,#dedede 75%);background-size:7px 7px;background-position:0 0,3.5px 3.5px;overflow:hidden"><svg style="left:5.5px;top:8px" width="15" height="15"><circle cx="7.5" cy="7.5" r="7.5" fill="#95bd18"/></svg><div class="a" style="left:13.6px;top:14.4px;width:12px;height:11px;background:#3a3a3a;border:1px solid #eaeaea"><div class="a" style="left:2.4px;top:2px;width:5.4px;height:5px;border:1px solid #eaeaea"></div></div></div>
<div class="t" style="transform:scaleX(0.929);transform-origin:0 0;left:380.3px;top:250.0px;font-size:10.5px;color:#f2f2f2;">小圆</div>
<svg style="left:321.2px;top:289.8px" width="12" height="7.4" viewBox="0 0 13 9"><path d="M0.3 4.5C2.5 1 5 0.3 6.5 0.3C8 0.3 10.5 1 12.7 4.5C10.5 8 8 8.7 6.5 8.7C5 8.7 2.5 8 0.3 4.5Z" fill="#e4e4e4"/><circle cx="6.5" cy="4.5" r="2.5" fill="#535353"/><circle cx="6.5" cy="4.5" r="1.1" fill="#e4e4e4"/></svg>
<div class="a" style="left:344.3px;top:279.0px;width:26.6px;height:26.4px;border:1px solid #f6f6f6;background-color:#fff;background-image:linear-gradient(45deg,#dedede 25%,transparent 25%,transparent 75%,#dedede 75%),linear-gradient(45deg,#dedede 25%,transparent 25%,transparent 75%,#dedede 75%);background-size:7px 7px;background-position:0 0,3.5px 3.5px;overflow:hidden"><div class="a" style="left:13.6px;top:14.4px;width:12px;height:11px;background:#3a3a3a;border:1px solid #eaeaea"><div class="a" style="left:2.4px;top:2px;width:5.4px;height:5px;border:1px solid #eaeaea"></div></div></div>
<div class="t" style="transform:scaleX(0.929);transform-origin:0 0;left:380.3px;top:285.5px;font-size:10.5px;color:#f2f2f2;">中圆</div>
<svg style="left:321.2px;top:325.3px" width="12" height="7.4" viewBox="0 0 13 9"><path d="M0.3 4.5C2.5 1 5 0.3 6.5 0.3C8 0.3 10.5 1 12.7 4.5C10.5 8 8 8.7 6.5 8.7C5 8.7 2.5 8 0.3 4.5Z" fill="#e4e4e4"/><circle cx="6.5" cy="4.5" r="2.5" fill="#535353"/><circle cx="6.5" cy="4.5" r="1.1" fill="#e4e4e4"/></svg>
<div class="a" style="left:344.3px;top:314.5px;width:26.6px;height:26.4px;border:1px solid #f6f6f6;background-color:#fff;background-image:linear-gradient(45deg,#dedede 25%,transparent 25%,transparent 75%,#dedede 75%),linear-gradient(45deg,#dedede 25%,transparent 25%,transparent 75%,#dedede 75%);background-size:7px 7px;background-position:0 0,3.5px 3.5px;overflow:hidden"><svg style="left:4.5px;top:6.5px" width="18" height="18"><circle cx="9" cy="9" r="9" fill="#c8161d"/></svg><div class="a" style="left:13.6px;top:14.4px;width:12px;height:11px;background:#3a3a3a;border:1px solid #eaeaea"><div class="a" style="left:2.4px;top:2px;width:5.4px;height:5px;border:1px solid #eaeaea"></div></div></div>
<div class="t" style="transform:scaleX(0.929);transform-origin:0 0;left:380.3px;top:321.0px;font-size:10.5px;color:#f2f2f2;">大圆</div>
<div class="a" style="left:344.3px;top:351px;width:26.6px;height:8.5px;background:#fafafa;"></div>
<div class="a" style="left:334px;top:237px;width:83px;height:108px;border:2.5px solid #d9403f"></div>
<div class="a" style="left:512px;top:239px;width:14px;height:120.5px;background:#464646;"></div>
<div class="a" style="left:513px;top:239px;width:13px;height:14px;background:#3e3e3e;"></div>
<div class="a" style="left:513px;top:345.5px;width:13px;height:14px;background:#3e3e3e;"></div>
<div class="a" style="left:513.6px;top:253.5px;width:11.4px;height:77px;background:#656565;"></div>
<svg style="left:516px;top:244px" width="7" height="5"><path d="M0.5 4.5L3.5 1.2L6.5 4.5" stroke="#a0a0a0" stroke-width="1.2" fill="none"/></svg>
<svg style="left:516px;top:349px" width="7" height="5"><path d="M0.5 0.5L3.5 3.8L6.5 0.5" stroke="#a0a0a0" stroke-width="1.2" fill="none"/></svg>
<div class="a" style="left:314.5px;top:359.5px;width:211.5px;height:1px;background:#404040;"></div>
<svg style="left:349px;top:365px" width="13" height="8"><rect x="0.8" y="1.3" width="6.5" height="5.4" rx="2.7" stroke="#9a9a9a" stroke-width="1.4" fill="none"/><rect x="5.7" y="1.3" width="6.5" height="5.4" rx="2.7" stroke="#9a9a9a" stroke-width="1.4" fill="none"/></svg>
<div class="t" style="left:374px;top:362px;font-family:'Liberation Serif',serif;font-style:italic;font-size:14px;color:#c4c4c4;line-height:16px;height:16px">fx</div>
<svg style="left:396px;top:364px" width="13" height="11"><rect x="0" y="0" width="13" height="11" fill="#c4c4c4"/><circle cx="6.5" cy="5.5" r="3" fill="#535353"/></svg>
<svg style="left:420px;top:364px" width="13" height="14"><circle cx="6" cy="6" r="5" stroke="#c4c4c4" stroke-width="1.3" fill="none"/><path d="M2.5 9.5A5 5 0 0 1 9.5 2.5Z" fill="#c4c4c4"/><rect x="10" y="11.5" width="2.5" height="2" fill="#c4c4c4"/></svg>
<svg style="left:444px;top:365px" width="12" height="10"><path d="M0 0H4.5L6 1.8H12V10H0Z" fill="#c4c4c4"/><path d="M0 3H12" stroke="#535353" stroke-width="0.8"/></svg>
<svg style="left:467.5px;top:365px" width="11" height="11"><path d="M0.8 0.8H10.2V10.2H4.6L0.8 6.6Z" stroke="#c4c4c4" stroke-width="1.6" fill="none"/><path d="M0.8 6.6H4.6V10.2Z" fill="#c4c4c4"/></svg>
<svg style="left:491.5px;top:364px" width="10.4" height="12" viewBox="0 0 12 13"><path d="M0 2.5H12M4 2.5V0.7H8V2.5" stroke="#949494" stroke-width="1.4" fill="none"/><path d="M1.5 4H10.5V12.5H1.5Z" fill="#949494"/><path d="M4.3 5.5V11M7.7 5.5V11" stroke="#535353" stroke-width="1"/></svg>
<svg style="left:13.5px;top:91.0px" width="14" height="14" viewBox="0 0 14 14"><g transform="scale(0.875)"><path d="M8 0L5 3.4H6.9V6.9H3.4V5L0 8L3.4 11V9.1H6.9V12.6H5L8 16L11 12.6H9.1V9.1H12.6V11L16 8L12.6 5V6.9H9.1V3.4H11Z" fill="#f4f4f4"/></g></svg>
<svg style="left:29.5px;top:104.0px" width="3" height="3"><path d="M3 0V3H0Z" fill="#b4b4b4"/></svg>
<svg style="left:13.5px;top:113.1px" width="15" height="12" viewBox="0 0 15 12"><rect x="0.75" y="0.75" width="13.5" height="10.5" fill="none" stroke="#e4e4e4" stroke-width="1.5" stroke-dasharray="3 1.6"/></svg>
<svg style="left:29.5px;top:126.6px" width="3" height="3"><path d="M3 0V3H0Z" fill="#b4b4b4"/></svg>
<svg style="left:13.5px;top:136.3px" width="15" height="15" viewBox="0 0 15 15"><path d="M1 1.5L7 5L14 0.8L12 8.5L7.5 10L4.5 6.5Z" fill="none" stroke="#e4e4e4" stroke-width="1.4" stroke-linejoin="miter"/><path d="M7.5 10L5 11L4.5 14.5L6.5 12.5L8 13.5Z" fill="#e4e4e4"/></svg>
<svg style="left:29.5px;top:149.3px" width="3" height="3"><path d="M3 0V3H0Z" fill="#b4b4b4"/></svg>
<svg style="left:11.5px;top:158.9px" width="17" height="15" viewBox="0 0 17 15"><circle cx="6" cy="8" r="5" fill="none" stroke="#e4e4e4" stroke-width="1.3" stroke-dasharray="2 1.5"/><path d="M15.5 0.8L10.5 7" stroke="#e4e4e4" stroke-width="2.2" stroke-linecap="round"/><path d="M9.8 6.3C8.3 6.8 8.2 8.5 7.6 10.6C9.6 10.8 11.5 9.8 11.4 7.6Z" fill="#e4e4e4"/></svg>
<svg style="left:29.5px;top:171.9px" width="3" height="3"><path d="M3 0V3H0Z" fill="#b4b4b4"/></svg>
<svg style="left:12.5px;top:180.5px" width="15" height="15" viewBox="0 0 15 15"><path d="M3.5 0V11.5H15M0 3.5H11.5V15" fill="none" stroke="#e4e4e4" stroke-width="1.7"/></svg>
<svg style="left:29.5px;top:194.5px" width="3" height="3"><path d="M3 0V3H0Z" fill="#b4b4b4"/></svg>
<svg style="left:14.6px;top:206.0px" width="14.4" height="12" viewBox="0 0 14.4 12"><rect x="0.75" y="0.75" width="12.9" height="10.5" fill="none" stroke="#e4e4e4" stroke-width="1.5"/><path d="M0.75 0.75L13.65 11.25M13.65 0.75L0.75 11.25" stroke="#e4e4e4" stroke-width="1.1"/></svg>
<svg style="left:13.7px;top:226.8px" width="15" height="15" viewBox="0 0 15 15"><path d="M10.2 4.8L3 12L1 14L0.8 12.2L8.2 4.8" fill="#e4e4e4" stroke="#e4e4e4" stroke-width="1.2" stroke-linejoin="round"/><path d="M8 3.2L11.8 7" stroke="#e4e4e4" stroke-width="2.2" stroke-linecap="round"/><path d="M10.5 4.5L13 2" stroke="#e4e4e4" stroke-width="3.2" stroke-linecap="round"/></svg>
<svg style="left:29.5px;top:239.8px" width="3" height="3"><path d="M3 0V3H0Z" fill="#b4b4b4"/></svg>
<svg style="left:13.7px;top:249.9px" width="15" height="14" viewBox="0 0 15 14"><rect x="2" y="2" width="11" height="10" fill="none" stroke="#e4e4e4" stroke-width="1.3"/><path d="M4 0.5V2M7.5 0.5V2M11 0.5V2M4 12V13.5M7.5 12V13.5M11 12V13.5M0.5 4.5H2M0.5 7H2M0.5 9.5H2M13 4.5H14.5M13 7H14.5M13 9.5H14.5" stroke="#e4e4e4" stroke-width="1.4"/></svg>
<svg style="left:29.5px;top:262.4px" width="3" height="3"><path d="M3 0V3H0Z" fill="#b4b4b4"/></svg>
<svg style="left:13.8px;top:272.0px" width="14" height="15" viewBox="0 0 14 15"><path d="M12.8 1L6.5 8.5" stroke="#e4e4e4" stroke-width="2.4" stroke-linecap="round"/><path d="M5.6 7.4C3.6 7.8 3.2 9.5 3 11C2.8 12.5 1.8 13.3 0.6 13.8C3.2 14.6 6 14 7.2 12C8 10.7 7.4 9 5.6 7.4Z" fill="#e4e4e4"/></svg>
<svg style="left:29.5px;top:285.0px" width="3" height="3"><path d="M3 0V3H0Z" fill="#b4b4b4"/></svg>
<svg style="left:14.5px;top:293.9px" width="13" height="15" viewBox="0 0 13 15"><path d="M6.5 0.5C8.3 0.5 9.5 1.8 9.5 3.3C9.5 4.8 8.2 5.5 8.2 7V8.5H12.5V11H0.5V8.5H4.8V7C4.8 5.5 3.5 4.8 3.5 3.3C3.5 1.8 4.7 0.5 6.5 0.5Z" fill="#e4e4e4"/><rect x="0.5" y="12.4" width="12" height="1.8" fill="#e4e4e4"/></svg>
<svg style="left:29.5px;top:307.7px" width="3" height="3"><path d="M3 0V3H0Z" fill="#b4b4b4"/></svg>
<svg style="left:12.0px;top:317.3px" width="16" height="15" viewBox="0 0 16 15"><path d="M14.5 1.5L8.5 8.5" stroke="#e4e4e4" stroke-width="2.3" stroke-linecap="round"/><path d="M7.6 7.6C5.8 8 5.4 9.5 5.2 10.8C5 12.2 4.2 13 3 13.5C5.5 14.3 8 13.8 9.2 12C10 10.7 9.4 9 7.6 7.6Z" fill="#e4e4e4"/><path d="M1 6.5A4 4 0 0 1 8 3.3" fill="none" stroke="#e4e4e4" stroke-width="1.3"/><path d="M0 4.2L1 7.5L3.8 5.6Z" fill="#e4e4e4"/></svg>
<svg style="left:29.5px;top:330.3px" width="3" height="3"><path d="M3 0V3H0Z" fill="#b4b4b4"/></svg>
<svg style="left:12.5px;top:339.9px" width="16" height="15" viewBox="0 0 16 15"><g transform="rotate(-42 9.5 9)"><rect x="3" y="5.6" width="13" height="7" rx="1.2" fill="#e4e4e4"/><rect x="7.2" y="6.6" width="1.1" height="5" fill="#535353"/></g><path d="M3 0.5V4.5M1 2.5H5M7 0.6V3M5.8 1.8H8.2M1.6 6.6V8.6M0.6 7.6H2.6" stroke="#e4e4e4" stroke-width="1.1"/></svg>
<svg style="left:29.5px;top:352.9px" width="3" height="3"><path d="M3 0V3H0Z" fill="#b4b4b4"/></svg>
<svg style="left:13.8px;top:364.1px" width="14.4" height="11.6"><defs><linearGradient id="gd" x1="0" y1="0" x2="1" y2="0"><stop offset="0" stop-color="#2c2c2c"/><stop offset="1" stop-color="#dcdcdc"/></linearGradient></defs><rect x="0.6" y="0.6" width="13.2" height="10.4" fill="url(#gd)" stroke="#e4e4e4" stroke-width="1.2"/></svg>
<svg style="left:29.5px;top:375.6px" width="3" height="3"><path d="M3 0V3H0Z" fill="#b4b4b4"/></svg>
<svg style="left:13.0px;top:385.7px" width="15" height="15" viewBox="0 0 15 15"><path d="M6.2 2.2C8 0.6 11.2 0.8 12.8 2.6C14.4 4.4 14 7 12.4 8.4L10.2 9.6L8.6 7.6L4.2 13.4C3.4 14.4 1.6 13.2 2.4 12L6.6 6.2L5.4 5C4.8 4.2 5.2 3 6.2 2.2Z" fill="#e4e4e4"/><path d="M7.4 5.6L10 3.4M9.2 7.2L11.6 5.2" stroke="#535353" stroke-width="1"/></svg>
<svg style="left:29.5px;top:398.2px" width="3" height="3"><path d="M3 0V3H0Z" fill="#b4b4b4"/></svg>
<svg style="left:12.5px;top:408.3px" width="16" height="14" viewBox="0 0 16 14"><ellipse cx="7.2" cy="5.4" rx="6" ry="4.6" fill="#e4e4e4"/><ellipse cx="6.6" cy="4.8" rx="2.3" ry="1.5" fill="#535353"/><path d="M9.5 8.5L13.5 12.8" stroke="#e4e4e4" stroke-width="2.6" stroke-linecap="round"/></svg>
<svg style="left:29.5px;top:420.8px" width="3" height="3"><path d="M3 0V3H0Z" fill="#b4b4b4"/></svg>
<svg style="left:14.3px;top:431.2px" width="14" height="14" viewBox="0 0 14 14"><g transform="scale(0.9)"><path d="M9 0.8L14.2 6L9.5 11.5L2.5 13.5L1 14L1.5 12.5L3.5 5.5Z" fill="none" stroke="#e4e4e4" stroke-width="1.7" stroke-linejoin="round"/><path d="M1.5 13.5L7 8" stroke="#e4e4e4" stroke-width="1.3"/><circle cx="7.6" cy="7.4" r="1.6" fill="#e4e4e4"/></g></svg>
<svg style="left:29.5px;top:443.4px" width="3" height="3"><path d="M3 0V3H0Z" fill="#b4b4b4"/></svg>
<div class="t" style="left:15.5px;top:450.3px;width:13px;text-align:center;font-family:'Liberation Serif',serif;font-weight:bold;font-size:16.5px;line-height:20px;height:20px;color:#ececec">T</div>
<svg style="left:29.5px;top:466.1px" width="3" height="3"><path d="M3 0V3H0Z" fill="#b4b4b4"/></svg>
<svg style="left:16.0px;top:475.2px" width="10" height="15" viewBox="0 0 10 15"><path d="M0.5 0.5V12L3.5 9.3L5.6 14.3L7.8 13.3L5.7 8.5L9.5 8.3Z" fill="#e4e4e4"/></svg>
<svg style="left:29.5px;top:488.7px" width="3" height="3"><path d="M3 0V3H0Z" fill="#b4b4b4"/></svg>
<svg style="left:12.5px;top:499.3px" width="16" height="13" viewBox="0 0 16 13"><ellipse cx="8" cy="6.5" rx="6.3" ry="5.2" fill="#646464" stroke="#e4e4e4" stroke-width="1.4"/></svg>
<svg style="left:29.5px;top:511.3px" width="3" height="3"><path d="M3 0V3H0Z" fill="#b4b4b4"/></svg>
<svg style="left:13.5px;top:520.5px" width="15" height="15" viewBox="0 0 15 15"><g stroke="#e4e4e4" stroke-width="1.5" stroke-linecap="round" fill="none"><path d="M4.3 8.5V3.2"/><path d="M6.4 7.5V1.6"/><path d="M8.5 7.5V1.4"/><path d="M10.6 8V2.8"/></g><path d="M3.6 7.8H11.3V9.5L12.6 7.6C13.3 6.6 14.6 7.4 14 8.5L11.2 13.2C10.6 14.2 9.8 14.7 8.6 14.7H7C5.2 14.7 4.2 13.8 3.6 12.3L1.2 8.2C0.7 7.2 2 6.5 2.7 7.5L3.6 8.8Z" fill="#e4e4e4"/></svg>
<svg style="left:29.5px;top:534.0px" width="3" height="3"><path d="M3 0V3H0Z" fill="#b4b4b4"/></svg>
<svg style="left:13.5px;top:543.6px" width="15" height="15" viewBox="0 0 15 15"><circle cx="6" cy="6" r="4.8" fill="none" stroke="#e4e4e4" stroke-width="1.6"/><path d="M9.6 9.6L14 14" stroke="#e4e4e4" stroke-width="2.2" stroke-linecap="round"/></svg>
<div class="a" style="left:0px;top:0px;width:600px;height:1px;background:#3e3e3e;"></div>
<div class="a" style="left:0px;top:0px;width:2.5px;height:62px;background:#3e3e3e;"></div>
<div class="a" style="left:0px;top:0px;width:1px;height:567px;background:#4e4e4e;"></div>
<div class="a" style="left:0px;top:562px;width:600px;height:5px;background:#3c3c3c;"></div>
<div class="a" style="left:596.5px;top:0px;width:3.5px;height:62px;background:#3e3e3e;"></div>
</body></html>
